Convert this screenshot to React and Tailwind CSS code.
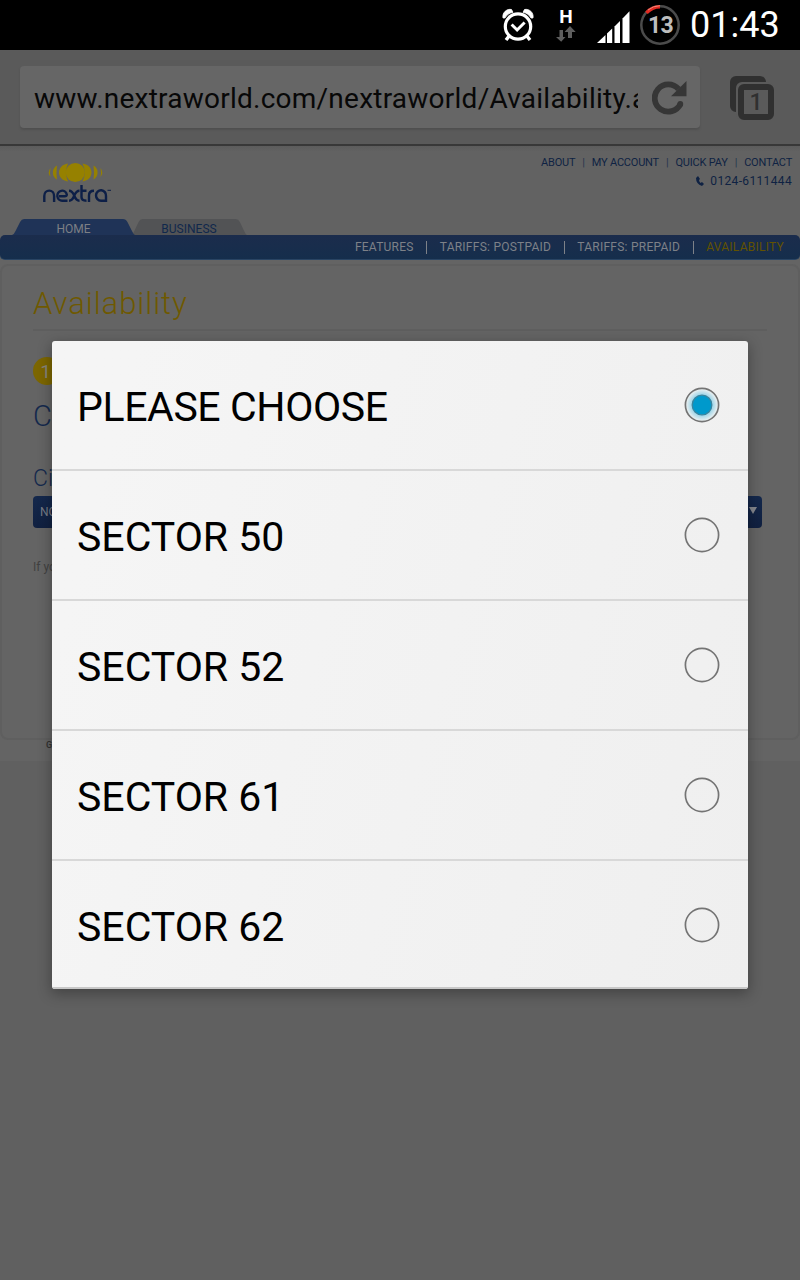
import React from "react";

const OPTIONS = [
  { label: "PLEASE CHOOSE", tracking: "tracking-[-0.4px]" },
  { label: "SECTOR 50" },
  { label: "SECTOR 52" },
  { label: "SECTOR 61" },
  { label: "SECTOR 62" },
];

const AlarmIcon = () => (
  <svg className="h-[34px] w-[34px]" viewBox="0 0 34 34" fill="none" stroke="#fff">
    <circle cx="17" cy="18.5" r="12.7" strokeWidth="3.2" />
    <path d="M10.600 16.500l5.500 5.500 7.500-7.500" strokeWidth="3" />
    <path d="M8.500 27.500l-3.500 4.500M25.500 27.500l3.500 4.500" strokeWidth="3.400" />
    <path d="M2 10C1 4.500 6 .5 10.500 1.500L12 4.300C8.500 5 5.500 7 4 10z" fill="#fff" stroke="#fff" strokeWidth="0.8" />
    <path d="M32 10C33 4.500 28 .5 23.500 1.500L22 4.300C25.500 5 28.500 7 30 10z" fill="#fff" stroke="#fff" strokeWidth="0.8" />
  </svg>
);

const DataArrows = () => (
  <svg className="h-4 w-5" viewBox="0 0 20 16" fill="#5e5e5e">
    <path d="M3.500 4h3.500v7h2.500l-4.300 4.700L0 11h3.500z" />
    <path d="M12 12h4V6h3.700L14 0 8.600 6H12z" />
  </svg>
);

const SignalIcon = () => (
  <svg className="h-8 w-[33px]" viewBox="0 0 33 32" fill="#fff">
    <path d="M0 32L8.500 24V32z" />
    <path d="M10 22.500L15.200 17.500V32H10z" />
    <path d="M17.500 15.500L23 10V32H17.500z" />
    <path d="M25.500 7.500L32.500 .3V32H25.500z" />
  </svg>
);

const BatteryRing = () => (
  <div className="relative flex h-10 w-10 items-center justify-center">
    <svg className="absolute inset-0 h-10 w-10" viewBox="0 0 40 40" fill="none">
      <circle cx="20" cy="20" r="18.700" stroke="#4b4b4b" strokeWidth="2.500" />
      <path d="M6.500 7.800A18.300 18.300 0 0 1 20 1.700" stroke="#e22a22" strokeWidth="3.400" />
      <path d="M8 5A19.500 19.500 0 0 1 20 .7" stroke="#f08878" strokeWidth="1" />
    </svg>
    <span className="relative pt-px pl-px text-[23px] leading-none font-bold tracking-[-0.6px] text-[#bdbdbd]">13</span>
  </div>
);

const StatusBar = () => (
  <div className="flex h-[50px] items-center bg-black pl-[501px] text-white">
    <AlarmIcon />
    <div className="ml-[21px] flex w-5 flex-col items-center">
      <span className="text-[19px] leading-[18px] font-bold">H</span>
      <DataArrows />
    </div>
    <div className="ml-[21px] pt-[3px]">
      <SignalIcon />
    </div>
    <div className="ml-[10px]">
      <BatteryRing />
    </div>
    <span className="ml-[10px] text-[36px] leading-none">01:43</span>
  </div>
);

const ReloadIcon = () => (
  <svg className="h-[34px] w-[36px]" viewBox="0 0 36 34" fill="none">
    <path d="M28.500 23A13.600 13.600 0 1 1 26.500 8" stroke="#363636" strokeWidth="5.800" />
    <circle cx="28.300" cy="23" r="2.900" fill="#363636" />
    <path d="M34.500 0V15.300H19z" fill="#363636" />
  </svg>
);

const TabsIcon = () => (
  <div className="relative h-11 w-11">
    <div className="absolute top-0 left-0 h-9 w-9 rounded-md bg-[#303030]" />
    <div className="absolute top-[6px] left-[6px] h-[38px] w-[38px] rounded-md bg-[#5a5a5a]" />
    <div className="absolute right-0 bottom-0 flex h-9 w-9 items-center justify-center rounded-md border-6 border-[#303030] bg-[#5a5a5a] text-[23px] leading-none font-medium text-[#303030]">
      1
    </div>
  </div>
);

const BrowserBar = () => (
  <div className="flex h-24 items-start border-b-2 border-[#383838] bg-[#5a5a5a] pt-4 pl-5">
    <div className="flex h-[62px] w-[680px] items-center rounded-[4px] bg-[#666666] pl-[14px] shadow-[0_2px_2px_#505050]">
      <span className="w-[604px] overflow-hidden pt-[3px] text-[28px] tracking-[0.24px] whitespace-nowrap text-[#080808]">
        www.nextraworld.com/nextraworld/Availability.a
      </span>
      <div className="mt-[2px] ml-[14px]">
        <ReloadIcon />
      </div>
    </div>
    <div className="mt-[10px] ml-[30px]">
      <TabsIcon />
    </div>
  </div>
);

const Logo = () => (
  <svg className="h-[42px] w-[70px]" viewBox="0 0 70 42">
    <g fill="#968100">
      <path d="M8.500 6Q5 10.500 8.500 15Q7.500 10.500 8.500 6z" />
      <path d="M15 3.500C9.500 6 9.500 15 15 17.500Q14 10.500 15 3.500z" />
      <path d="M26 1.500C14 3 14 18 26 19.500Q22 10.500 26 1.500z" />
      <circle cx="33.300" cy="10.500" r="9.600" />
      <path d="M40.500 1.500C52.500 3 52.500 18 40.500 19.500Q45 10.500 40.500 1.500z" />
      <path d="M51.500 3.500C57 6 57 15 51.500 17.500Q52.500 10.500 51.500 3.500z" />
      <path d="M58.500 6Q62 10.500 58.500 15Q59.500 10.500 58.500 6z" />
    </g>
    <g fill="none" stroke="#0d1f47" strokeWidth="2.400">
      <path d="M2.300 40V34a4.800 5.300 0 0 1 9.800 0v6" />
      <path d="M25.500 38.700h-5a4.800 5 0 1 1 4.300-6.200q0 1.800-2.300 1.800h-5.500" />
      <path d="M27 28.800c6.500 0 4 9.900 10.500 9.900M37.500 28.800c-6.500 0-4 9.900-10.500 9.900" />
      <path d="M39.500 23v12q0 3.700 5 3.700M39.500 28.800h5" />
      <path d="M47 40v-6.500q0-4.700 5-4.700" />
      <path d="M64 40v-6a5 5.200 0 1 0-5 4.700h5" />
    </g>
    <path d="M65.500 28.300h3.500" stroke="#0d1f47" strokeWidth="1" />
  </svg>
);

const TopLinks = () => (
  <div className="flex flex-col items-end pt-[9px] pr-2 text-[#0f2243]">
    <div className="flex h-4 items-center gap-[7px] text-[11px] tracking-[-0.2px] whitespace-nowrap">
      <span>ABOUT</span>
      <span className="text-[#27364e]">|</span>
      <span>MY ACCOUNT</span>
      <span className="text-[#27364e]">|</span>
      <span>QUICK PAY</span>
      <span className="text-[#27364e]">|</span>
      <span>CONTACT</span>
    </div>
    <div className="mt-[3px] flex h-[14px] items-center gap-[6px] text-[12px] tracking-[0.35px]">
      <svg className="h-[10px] w-2" viewBox="0 0 8 10">
        <path d="M2 0L0 2Q0 8 6 10L8 8 6 6 4.500 7Q3 5.500 3 4L4 3z" fill="#0f2243" />
      </svg>
      <span>0124-6111444</span>
    </div>
  </div>
);

const SiteTab = ({ label, className, fill }) => (
  <div className={`relative flex h-4 items-center justify-center ${className}`}>
    <svg className="absolute inset-0 h-full w-full" viewBox="0 0 122 16" preserveAspectRatio="none">
      <path d="M0 16Q2 15.500 3.500 12L8 3Q9.500 0 12 0H110Q113 0 114.500 3L119 12Q120.500 15.500 122 16z" fill={fill} />
    </svg>
    <span className="relative pt-[3px] text-[12px] leading-none">{label}</span>
  </div>
);

const NavDivider = () => <span className="mx-[12.500px] h-[13px] w-px bg-[#7d8188]" />;

const SiteHeader = () => (
  <div className="flex h-[114px] flex-col bg-linear-to-b from-[#5c5c5c] to-[#626262] to-5%">
    <div className="flex h-[73px] justify-between">
      <div className="pt-4 pl-[42px]">
        <Logo />
      </div>
      <TopLinks />
    </div>
    <div className="flex h-4 pl-3">
      <SiteTab label="HOME" className="z-10 w-[123px] text-[#7d7f84]" fill="#1f3357" />
      <SiteTab label="BUSINESS" className="-ml-1 w-[116px] text-[#10284c]" fill="#525355" />
    </div>
    <div className="flex h-[25px] items-center justify-end rounded-[5px] border-b border-[#294463] bg-linear-to-b from-[#1b2c4c] to-[#152e4c] pr-4 text-[12px] tracking-[0.25px] whitespace-nowrap text-[#7d8188]">
      <span>FEATURES</span>
      <NavDivider />
      <span>TARIFFS: POSTPAID</span>
      <NavDivider />
      <span>TARIFFS: PREPAID</span>
      <NavDivider />
      <span className="text-[#625200]">AVAILABILITY</span>
    </div>
  </div>
);

const AvailabilityCard = () => (
  <div className="mt-[4px] h-[476px] rounded-[8px] border-2 border-[#5f5f5f] bg-[#646464] px-[31px] pt-5">
    <h1 className="h-[45px] border-b-2 border-[#5e5e5e] text-[31px] leading-[35px] font-light tracking-[0.95px] text-[#6f5900]">
      Availability
    </h1>
    <div className="mt-[26px] flex h-7 w-7 items-center justify-center rounded-full bg-[#7c6600] pr-[3px] text-[19px] leading-none text-[#85837a]">
      1
    </div>
    <h2 className="mt-[13px] h-[36px] text-[29px] leading-[36px] font-light text-[#14294d]">C</h2>
    <label className="mt-[32px] block h-[26px] text-[23px] leading-[26px] font-light text-[#14294d]">Ci</label>
    <div className="mt-[4px] flex h-8 w-[729px] items-center justify-between rounded-[4px] bg-linear-to-b from-[#14284c] to-[#102040] px-[7px] text-[12px] text-[#777b84]">
      <span>NO</span>
      <svg className="-mr-[2px] mb-1 h-[7px] w-2" viewBox="0 0 8 7">
        <path d="M0 0h8L4 7z" fill="#85888e" />
      </svg>
    </div>
    <p className="mt-[31px] text-[12px] leading-4 text-[#414141]">If yo</p>
  </div>
);

const Radio = ({ checked }) => (
  <svg className="h-9 w-9" viewBox="0 0 36 36">
    <defs>
      <radialGradient id="glow">
        <stop offset="0.6" stopColor="#9bd3e7" />
        <stop offset="0.95" stopColor="#eaf0f1" />
      </radialGradient>
    </defs>
    <circle cx="18" cy="18" r="16.600" fill={checked ? "url(#glow)" : "none"} stroke="#747474" strokeWidth="1.700" />
    {checked && <circle cx="18" cy="18" r="9.800" fill="#0099cc" stroke="#38859f" strokeWidth="1.300" />}
  </svg>
);

const ChoiceDialog = () => (
  <div className="absolute inset-x-0 top-[50px] bottom-0 flex items-center justify-center">
    <div className="w-[696px] overflow-hidden rounded-[3px] bg-linear-105 from-[#f5f5f5] from-10% to-[#efefef] shadow-[0_4px_14px_1px_rgba(0,0,0,0.3)]">
      {OPTIONS.map(({ label, tracking = "" }, i) => (
        <div
          key={label}
          className="flex h-[130px] items-center justify-between border-b-2 border-[#d8d8d8] pr-7 pl-[25px] last:h-[128px] last:border-[#c8c8c8] last:pt-[2px]"
        >
          <span className={`pt-1 text-[41px] leading-none whitespace-nowrap text-black ${tracking}`}>{label}</span>
          <Radio checked={i === 0} />
        </div>
      ))}
    </div>
  </div>
);

export default function App() {
  return (
    <div className="relative h-[1280px] w-[800px] overflow-hidden bg-[#606060] font-['Roboto',sans-serif]">
      <StatusBar />
      <BrowserBar />
      <div className="h-[615px] bg-[#646464]">
        <SiteHeader />
        <AvailabilityCard />
        <span className="block pl-[46px] text-[9px] leading-[10px] font-medium text-[#303030]">G</span>
      </div>
      <ChoiceDialog />
    </div>
  );
}
